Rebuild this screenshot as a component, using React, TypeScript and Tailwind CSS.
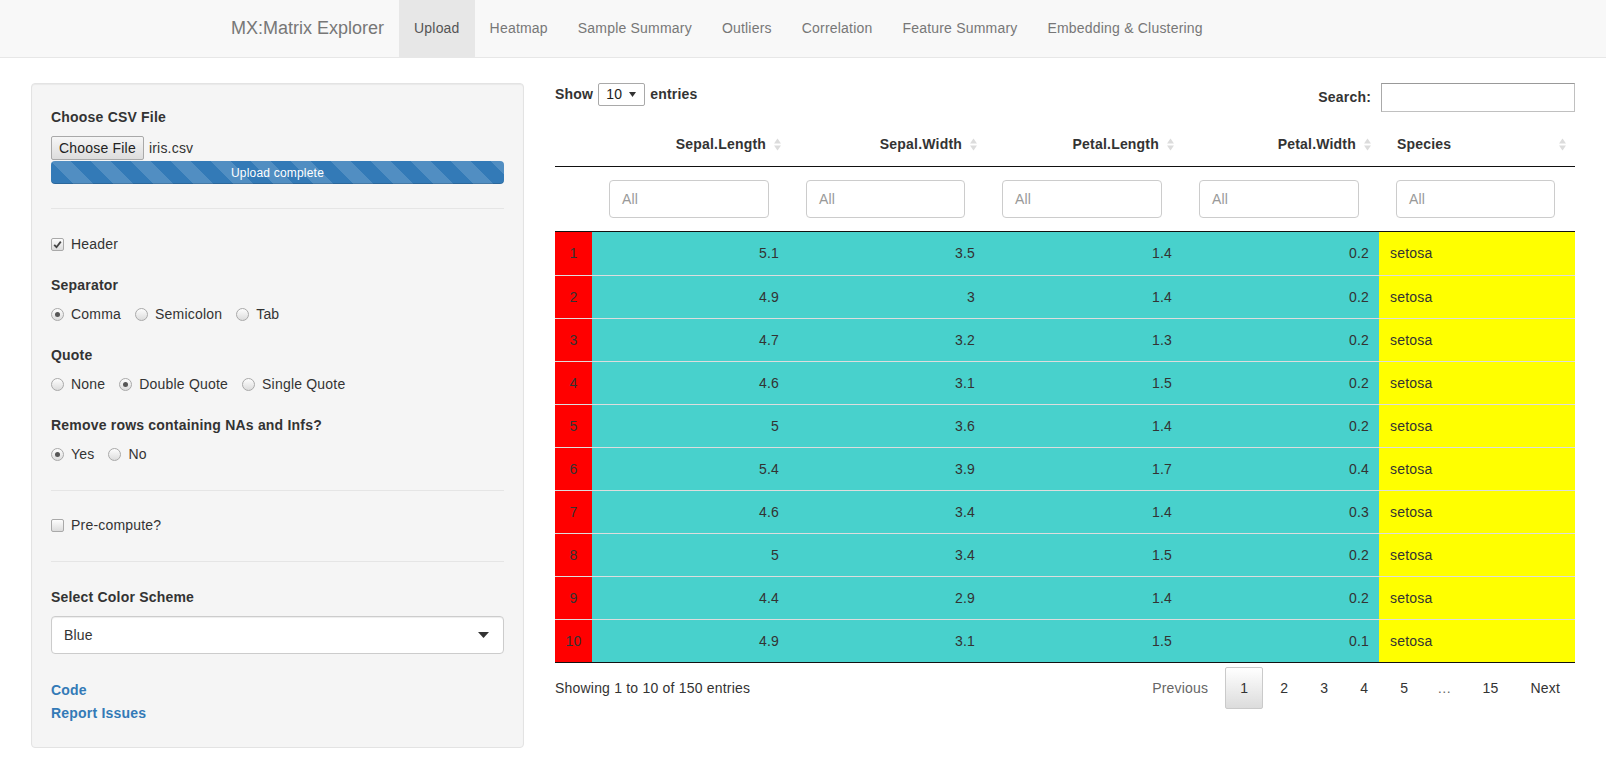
import React from 'react'

const navTabs = ['Upload', 'Heatmap', 'Sample Summary', 'Outliers', 'Correlation', 'Feature Summary', 'Embedding & Clustering']

const rows: [number, string, string, string, string, string][] = [
  [1, '5.1', '3.5', '1.4', '0.2', 'setosa'],
  [2, '4.9', '3', '1.4', '0.2', 'setosa'],
  [3, '4.7', '3.2', '1.3', '0.2', 'setosa'],
  [4, '4.6', '3.1', '1.5', '0.2', 'setosa'],
  [5, '5', '3.6', '1.4', '0.2', 'setosa'],
  [6, '5.4', '3.9', '1.7', '0.4', 'setosa'],
  [7, '4.6', '3.4', '1.4', '0.3', 'setosa'],
  [8, '5', '3.4', '1.5', '0.2', 'setosa'],
  [9, '4.4', '2.9', '1.4', '0.2', 'setosa'],
  [10, '4.9', '3.1', '1.5', '0.1', 'setosa'],
]

function Radio({ checked, label }: { checked?: boolean; label: string }) {
  return (
    <span className="flex items-center gap-[7px]">
      <span className="w-[13px] h-[13px] rounded-full border border-[#a9a9a9] bg-linear-to-b from-[#fdfdfd] to-[#dcdcdc] flex items-center justify-center">
        {checked && <span className="w-[5px] h-[5px] rounded-full bg-[#555]" />}
      </span>
      <span>{label}</span>
    </span>
  )
}

function Checkbox({ checked, label }: { checked?: boolean; label: string }) {
  return (
    <div className="flex items-center gap-[7px] h-5">
      <span className="w-[13px] h-[13px] rounded-[2px] border border-[#a9a9a9] bg-linear-to-b from-[#fdfdfd] to-[#dcdcdc] flex items-center justify-center">
        {checked && (
          <svg width="9" height="9" viewBox="0 0 9 9">
            <path d="M1.2 4.8 L3.5 7.2 L7.8 1.6" fill="none" stroke="#444" strokeWidth="1.8" />
          </svg>
        )}
      </span>
      <span>{label}</span>
    </div>
  )
}

function SortIcon() {
  return (
    <svg width="7" height="13" viewBox="0 0 7 13" className="shrink-0">
      <path d="M0 5.5 L3.5 0.5 L7 5.5 Z" fill="#dcdcdc" />
      <path d="M0 7.5 L3.5 12.5 L7 7.5 Z" fill="#dcdcdc" />
    </svg>
  )
}

const gridCols = 'grid grid-cols-[37px_197px_196px_197px_197px_196px]'

export default function App() {
  return (
    <div className="min-h-screen bg-white text-[14px] tracking-[0.2px] text-[#333] font-['Liberation_Sans',Arial,sans-serif]">
      {/* Navbar */}
      <nav className="h-[58px] bg-[#f8f8f8] border-b border-[#e7e7e7] flex pl-[216px]">
        <div className="px-[15px] flex items-center text-[18px] text-[#777] tracking-normal">MX:Matrix Explorer</div>
        {navTabs.map((t, i) => (
          <div
            key={t}
            className={
              i === 0
                ? 'px-[15px] flex items-center bg-[#e7e7e7] text-[#555]'
                : 'px-[15px] flex items-center text-[#777]'
            }
          >
            {t}
          </div>
        ))}
      </nav>

      <div className="flex pl-[31px] pt-[25px] gap-[31px] items-start">
        {/* Sidebar */}
        <div className="w-[493px] bg-[#f5f5f5] border border-[#e3e3e3] rounded-[4px] shadow-[inset_0_1px_1px_rgba(0,0,0,0.05)] px-[19px] pt-[23px] pb-[24px]">
          <div className="h-5 leading-5 font-bold">Choose CSV File</div>
          <div className="mt-[9px] h-[24px] flex items-center">
            <div className="h-[24px] px-[7px] flex items-center border border-[#a9a9a9] rounded-[2px] bg-linear-to-b from-[#f6f6f6] to-[#dddddd] text-[#222]">
              Choose File
            </div>
            <span className="ml-[5px]">iris.csv</span>
          </div>
          <div className="mt-[1px] h-[23px] rounded-[4px] bg-[#337ab7] bg-[linear-gradient(45deg,rgba(255,255,255,.15)_25%,transparent_25%,transparent_50%,rgba(255,255,255,.15)_50%,rgba(255,255,255,.15)_75%,transparent_75%,transparent)] bg-size-[40px_40px] shadow-[inset_0_-1px_0_rgba(0,0,0,0.15)] flex items-center justify-center text-white text-[12px]">
            Upload complete
          </div>
          <div className="mt-[24px] border-t border-[#e5e5e5]" />

          <div className="mt-[25px]">
            <Checkbox checked label="Header" />
          </div>

          <div className="mt-[21px] h-5 leading-5 font-bold">Separator</div>
          <div className="mt-[9px] h-5 flex items-center gap-[14px]">
            <Radio checked label="Comma" />
            <Radio label="Semicolon" />
            <Radio label="Tab" />
          </div>

          <div className="mt-[21px] h-5 leading-5 font-bold">Quote</div>
          <div className="mt-[9px] h-5 flex items-center gap-[14px]">
            <Radio label="None" />
            <Radio checked label="Double Quote" />
            <Radio label="Single Quote" />
          </div>

          <div className="mt-[21px] h-5 leading-5 font-bold">Remove rows containing NAs and Infs?</div>
          <div className="mt-[9px] h-5 flex items-center gap-[14px]">
            <Radio checked label="Yes" />
            <Radio label="No" />
          </div>

          <div className="mt-[26px] border-t border-[#e5e5e5]" />
          <div className="mt-[24px]">
            <Checkbox label="Pre-compute?" />
          </div>
          <div className="mt-[26px] border-t border-[#e5e5e5]" />

          <div className="mt-[25px] h-5 leading-5 font-bold">Select Color Scheme</div>
          <div className="mt-[9px] h-[38px] bg-white border border-[#cccccc] rounded-[4px] shadow-[inset_0_1px_1px_rgba(0,0,0,0.075)] flex items-center justify-between pl-[12px] pr-[14px]">
            <span>Blue</span>
            <svg width="11" height="6" viewBox="0 0 11 6">
              <path d="M0 0 L11 0 L5.5 6 Z" fill="#333" />
            </svg>
          </div>

          <div className="mt-[26px] h-5 leading-5 font-bold text-[#337ab7]">Code</div>
          <div className="mt-[3px] h-5 leading-5 font-bold text-[#337ab7]">Report Issues</div>
        </div>

        {/* Main table area */}
        <div className="w-[1020px]">
          <div className="flex justify-between items-start h-[29px]">
            <div className="flex items-center gap-[5px] h-[23px] font-bold">
              <span>Show</span>
              <div className="w-[47px] h-[23px] border border-[#a9a9a9] rounded-[2px] bg-white flex items-center justify-between pl-[7px] pr-[8px] font-normal text-[#222]">
                <span>10</span>
                <svg width="7" height="5" viewBox="0 0 7 5">
                  <path d="M0 0 L7 0 L3.5 5 Z" fill="#333" />
                </svg>
              </div>
              <span>entries</span>
            </div>
            <div className="flex items-center gap-[10px] h-[29px] font-bold">
              <span>Search:</span>
              <div className="w-[194px] h-[29px] border border-[#c0c0c0] border-t-[#999] border-l-[#aaa] bg-white" />
            </div>
          </div>

          {/* Header */}
          <div className={`${gridCols} mt-[10px] h-[45px] border-b border-[#111] font-bold`}>
            <div />
            {['Sepal.Length', 'Sepal.Width', 'Petal.Length', 'Petal.Width'].map((h) => (
              <div key={h} className="flex items-center justify-end gap-[8px] pr-[8px]">
                <span>{h}</span>
                <SortIcon />
              </div>
            ))}
            <div className="flex items-center justify-between pl-[18px] pr-[9px]">
              <span>Species</span>
              <SortIcon />
            </div>
          </div>

          {/* Filter row */}
          <div className={`${gridCols} h-[65px] border-b border-[#111] items-center`}>
            <div />
            {[0, 1, 2, 3, 4].map((i) => (
              <div key={i} className="pl-[17px] pr-[20px]">
                <div className="h-[38px] bg-white border border-[#cccccc] rounded-[4px] flex items-center pl-[12px] text-[#999]">
                  All
                </div>
              </div>
            ))}
          </div>

          {/* Body */}
          <div className="border-b border-[#111]">
            {rows.map((r, i) => (
              <div
                key={r[0]}
                className={`${gridCols} h-[43px] ${i > 0 ? 'border-t border-[#dddddd]' : ''}`}
              >
                <div className="bg-[#ff0000] flex items-center justify-center">{r[0]}</div>
                {[r[1], r[2], r[3], r[4]].map((v, j) => (
                  <div key={j} className="bg-[#48d1cc] flex items-center justify-end pr-[10px]">
                    {v}
                  </div>
                ))}
                <div className="bg-[#ffff00] flex items-center pl-[11px]">{r[5]}</div>
              </div>
            ))}
          </div>

          {/* Footer */}
          <div className="flex justify-between items-start">
            <div className="mt-[15px] h-5 leading-5">Showing 1 to 10 of 150 entries</div>
            <div className="mt-[4px] flex items-center">
              <span className="px-[14px] h-[42px] flex items-center text-[#666] border border-transparent">Previous</span>
              {['1', '2', '3', '4', '5'].map((p) => (
                <span
                  key={p}
                  className={
                    p === '1'
                      ? 'ml-[2px] px-[14px] h-[42px] flex items-center border border-[#cacaca] rounded-[2px] bg-linear-to-b from-white to-[#dcdcdc]'
                      : 'ml-[2px] px-[14px] h-[42px] flex items-center border border-transparent'
                  }
                >
                  {p}
                </span>
              ))}
              <span className="px-[14px] h-[42px] flex items-center text-[#666]">…</span>
              <span className="ml-[2px] px-[14px] h-[42px] flex items-center border border-transparent">15</span>
              <span className="ml-[2px] px-[14px] h-[42px] flex items-center border border-transparent">Next</span>
            </div>
          </div>
        </div>
      </div>
    </div>
  )
}
